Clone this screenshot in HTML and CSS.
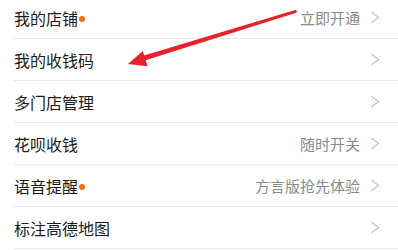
FILE: index.html
```html
<!DOCTYPE html>
<html lang="zh">
<head>
<meta charset="utf-8">
<link rel="stylesheet" href="styles.css">
</head>
<body>
<div class="list">
  <div class="row"><span class="label">我的店铺<i class="dot"></i></span><span class="extra">立即开通</span><svg class="chev" width="10" height="13" viewBox="0 0 10 13"><polyline points="1.2,1 8.6,6.5 1.2,12" /></svg></div>
  <div class="row"><span class="label">我的收钱码</span><span class="extra"></span><svg class="chev" width="10" height="13" viewBox="0 0 10 13"><polyline points="1.2,1 8.6,6.5 1.2,12" /></svg></div>
  <div class="row"><span class="label">多门店管理</span><span class="extra"></span><svg class="chev" width="10" height="13" viewBox="0 0 10 13"><polyline points="1.2,1 8.6,6.5 1.2,12" /></svg></div>
  <div class="row"><span class="label">花呗收钱</span><span class="extra">随时开关</span><svg class="chev" width="10" height="13" viewBox="0 0 10 13"><polyline points="1.2,1 8.6,6.5 1.2,12" /></svg></div>
  <div class="row"><span class="label">语音提醒<i class="dot"></i></span><span class="extra">方言版抢先体验</span><svg class="chev" width="10" height="13" viewBox="0 0 10 13"><polyline points="1.2,1 8.6,6.5 1.2,12" /></svg></div>
  <div class="row"><span class="label">标注高德地图</span><span class="extra"></span><svg class="chev" width="10" height="13" viewBox="0 0 10 13"><polyline points="1.2,1 8.6,6.5 1.2,12" /></svg></div>
</div>
<svg class="arrow" width="398" height="250" viewBox="0 0 398 250">
  <polygon points="296,9.8 297,12.4 143,61 141.5,56.3" fill="#e8202a"/>
  <polygon points="128,64 142.8,51 147.6,66.2" fill="#e8202a"/>
</svg>
</body>
</html>
```

FILE: styles.css
```css
html, body {
  margin: 0;
  padding: 0;
  background: #fff;
  width: 398px;
  height: 250px;
  overflow: hidden;
  position: relative;
}
.list {
  margin-top: -3px;
  padding-left: 14px;
  font-family: "Noto Sans CJK SC", "Noto Sans", sans-serif;
}
.row {
  height: 41px;
  border-bottom: 1px solid #e8e8e8;
  display: flex;
  align-items: center;
  padding-right: 18px;
}
.label {
  font-size: 16px;
  color: #1a1a1a;
  display: flex;
  align-items: center;
  flex: 1;
}
.dot {
  display: inline-block;
  width: 6px;
  height: 6px;
  border-radius: 50%;
  background: #ff6a0f;
  margin-left: 1px;
  margin-top: 3px;
}
.extra {
  font-size: 15px;
  color: #8a8a8a;
  margin-right: 10px;
}
.chev {
  display: block;
}
.chev polyline {
  fill: none;
  stroke: #c4c4c4;
  stroke-width: 1.3;
}
.arrow {
  position: absolute;
  left: 0;
  top: 0;
}
```
